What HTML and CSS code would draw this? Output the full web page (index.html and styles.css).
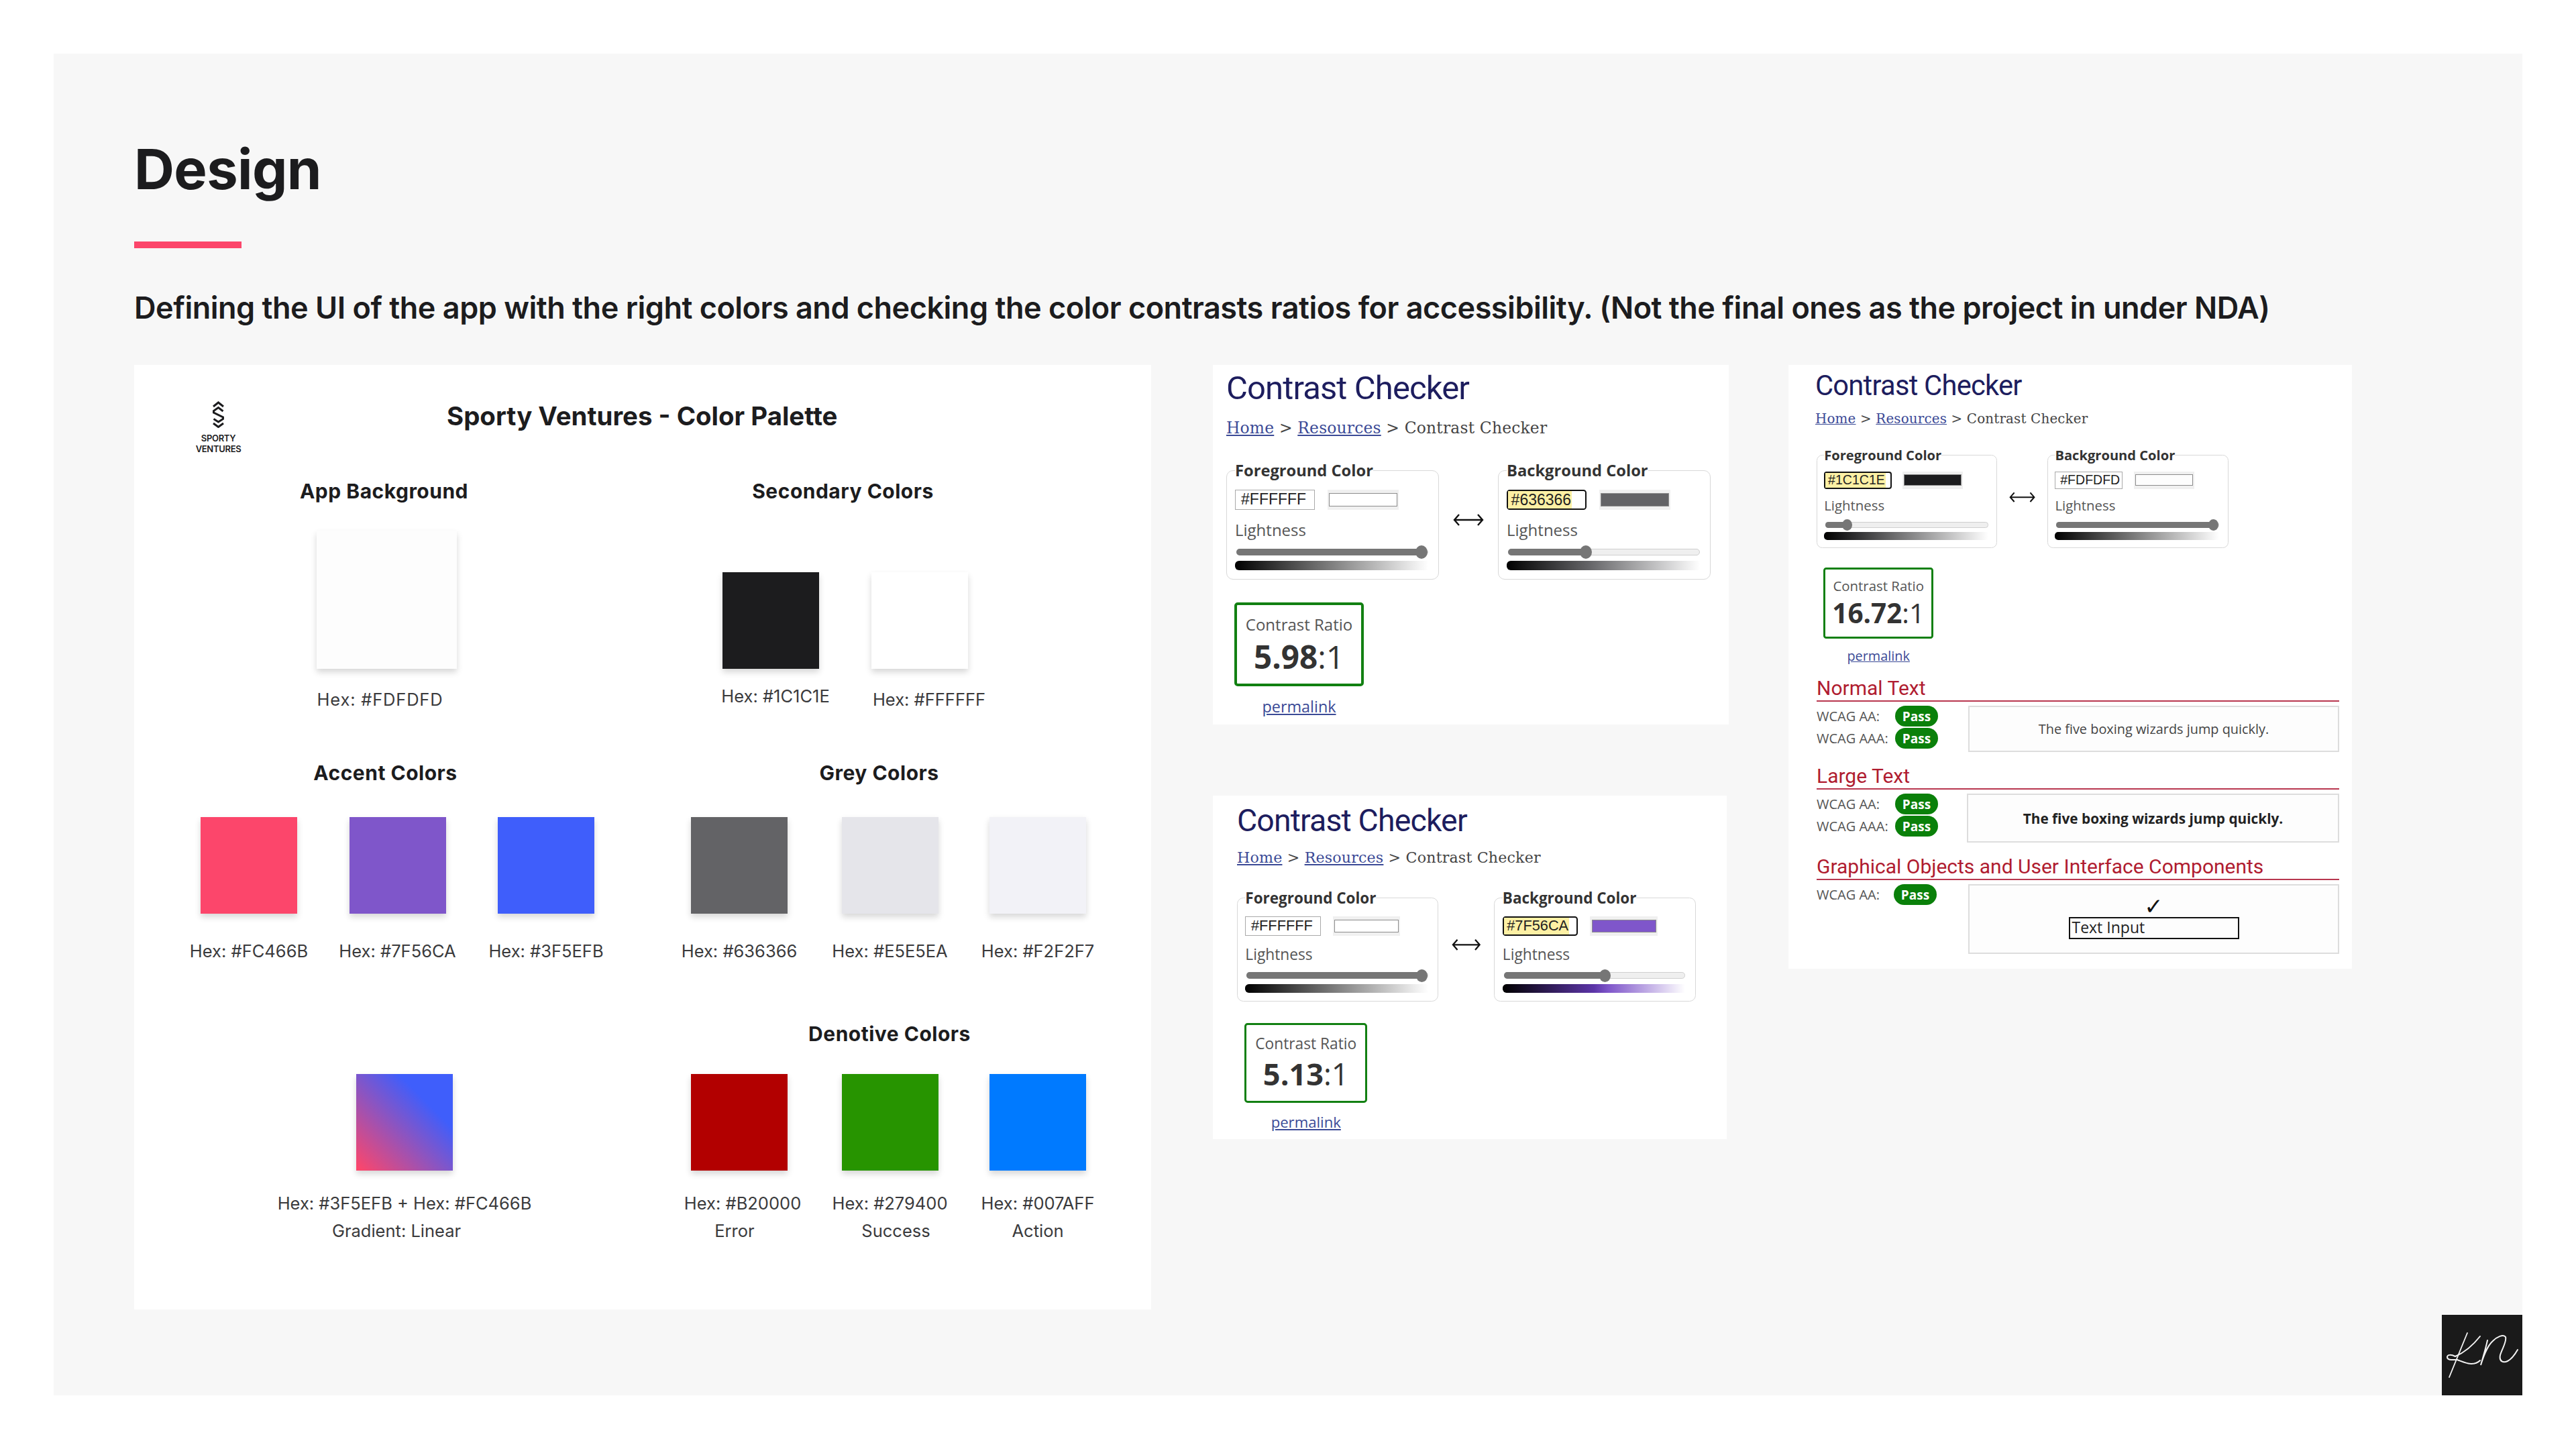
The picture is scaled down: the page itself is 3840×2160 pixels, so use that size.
FILE: index.html
```html
<!DOCTYPE html>
<html lang="en">
<head>
<meta charset="utf-8">
<title>Design</title>
<link rel="stylesheet" href="styles.css">
</head>
<body>
<main class="panel">
  <h1 class="title">Design</h1>
  <div class="title-bar"></div>
  <p class="lead">Defining the UI of the app with the right colors and checking the color contrasts ratios for accessibility. (Not the final ones as the project in under NDA)</p>

  <div class="boards">
    <section class="palette">
      <header class="palette-head">
        <div class="brand">
          <svg class="brand-mark" viewBox="0 0 17 40" width="17" height="40" aria-hidden="true">
            <path d="M1 8 L8.5 2 L16 8 M15.5 15 L8.5 9.5 L1.5 14.5 V17 L15.5 24 V26.5 L8.5 31 L1.5 26.5 M1 33 L8.5 38.5 L16 33" fill="none" stroke="#1c1c1e" stroke-width="3"/>
          </svg>
          <span class="brand-name">SPORTY<br>VENTURES</span>
        </div>
        <h2 class="palette-title">Sporty Ventures - Color Palette</h2>
      </header>

      <div class="palette-grid">
        <div class="group">
          <h3 class="group-title t-app">App Background</h3>
          <div class="swatches s-app">
            <div class="item item-wide">
              <div class="swatch big c-fdfdfd"></div>
              <span class="hex l-shift-app">Hex: #FDFDFD</span>
            </div>
          </div>
        </div>
        <div class="group">
          <h3 class="group-title t-secondary">Secondary Colors</h3>
          <div class="swatches s-secondary">
            <div class="item">
              <div class="swatch c-1c1c1e"></div>
              <span class="hex near l-shift-black">Hex: #1C1C1E</span>
            </div>
            <div class="item">
              <div class="swatch c-ffffff"></div>
              <span class="hex l-shift-white">Hex: #FFFFFF</span>
            </div>
          </div>
        </div>

        <div class="group">
          <h3 class="group-title t-accent">Accent Colors</h3>
          <div class="swatches s-accent">
            <div class="item"><div class="swatch c-fc466b"></div><span class="hex h-tight">Hex: #FC466B</span></div>
            <div class="item"><div class="swatch c-7f56ca"></div><span class="hex h-tight">Hex: #7F56CA</span></div>
            <div class="item"><div class="swatch c-3f5efb"></div><span class="hex h-tight">Hex: #3F5EFB</span></div>
          </div>
        </div>
        <div class="group">
          <h3 class="group-title t-grey">Grey Colors</h3>
          <div class="swatches s-grey">
            <div class="item"><div class="swatch c-636366"></div><span class="hex h-tight">Hex: #636366</span></div>
            <div class="item item-mid"><div class="swatch c-e5e5ea"></div><span class="hex h-tight">Hex: #E5E5EA</span></div>
            <div class="item"><div class="swatch c-f2f2f7"></div><span class="hex h-tight">Hex: #F2F2F7</span></div>
          </div>
        </div>

        <div class="group group-notitle">
          <div class="swatches s-gradient">
            <div class="item">
              <div class="swatch c-gradient"></div>
              <span class="hex h-grad">Hex: #3F5EFB + Hex: #FC466B</span>
              <span class="hex-note l-shift-grad">Gradient: Linear</span>
            </div>
          </div>
        </div>
        <div class="group">
          <h3 class="group-title t-denotive">Denotive Colors</h3>
          <div class="swatches s-grey s-denotive">
            <div class="item"><div class="swatch c-b20000"></div><span class="hex h-den l-right-s">Hex: #B20000</span><span class="hex-note l-left">Error</span></div>
            <div class="item item-mid"><div class="swatch c-279400"></div><span class="hex h-den">Hex: #279400</span><span class="hex-note l-right">Success</span></div>
            <div class="item"><div class="swatch c-007aff"></div><span class="hex h-den">Hex: #007AFF</span><span class="hex-note">Action</span></div>
          </div>
        </div>
      </div>
    </section>

    <div class="checker-col">
      <section class="checker size-a">
        <h2 class="checker-title">Contrast Checker</h2>
        <nav class="crumbs"><a href="#">Home</a> &gt; <a href="#">Resources</a> &gt; Contrast Checker</nav>
        <div class="pickers">
          <fieldset class="picker">
            <legend>Foreground Color</legend>
            <div class="field-row"><span class="hex-input">#FFFFFF</span><span class="well"><span class="well-color c-ffffff"></span></span></div>
            <div class="light-label">Lightness</div>
            <div class="slider" style="--v:1"><span class="slider-fill"></span><span class="slider-thumb"></span></div>
            <div class="ramp ramp-white"></div>
          </fieldset>
          <svg class="swap" viewBox="0 0 46 24" aria-hidden="true"><path d="M2 12 H44 M9 4 L2 12 L9 20 M37 4 L44 12 L37 20" fill="none" stroke="#111" stroke-width="2.4"/></svg>
          <fieldset class="picker">
            <legend>Background Color</legend>
            <div class="field-row"><span class="hex-input focus"><span class="hl">#636366</span></span><span class="well"><span class="well-color c-636366"></span></span></div>
            <div class="light-label">Lightness</div>
            <div class="slider" style="--v:.4"><span class="slider-fill"></span><span class="slider-thumb"></span></div>
            <div class="ramp ramp-grey"></div>
          </fieldset>
        </div>
        <div class="ratio-wrap">
          <div class="ratio"><span class="ratio-label">Contrast Ratio</span><span class="ratio-value"><b>5.98</b>:1</span></div>
          <a class="permalink" href="#">permalink</a>
        </div>
      </section>

      <section class="checker size-b">
        <h2 class="checker-title">Contrast Checker</h2>
        <nav class="crumbs"><a href="#">Home</a> &gt; <a href="#">Resources</a> &gt; Contrast Checker</nav>
        <div class="pickers">
          <fieldset class="picker">
            <legend>Foreground Color</legend>
            <div class="field-row"><span class="hex-input">#FFFFFF</span><span class="well"><span class="well-color c-ffffff"></span></span></div>
            <div class="light-label">Lightness</div>
            <div class="slider" style="--v:1"><span class="slider-fill"></span><span class="slider-thumb"></span></div>
            <div class="ramp ramp-white"></div>
          </fieldset>
          <svg class="swap" viewBox="0 0 46 24" aria-hidden="true"><path d="M2 12 H44 M9 4 L2 12 L9 20 M37 4 L44 12 L37 20" fill="none" stroke="#111" stroke-width="2.4"/></svg>
          <fieldset class="picker">
            <legend>Background Color</legend>
            <div class="field-row"><span class="hex-input focus"><span class="hl">#7F56CA</span></span><span class="well"><span class="well-color c-7f56ca"></span></span></div>
            <div class="light-label">Lightness</div>
            <div class="slider" style="--v:.56"><span class="slider-fill"></span><span class="slider-thumb"></span></div>
            <div class="ramp ramp-purple"></div>
          </fieldset>
        </div>
        <div class="ratio-wrap">
          <div class="ratio"><span class="ratio-label">Contrast Ratio</span><span class="ratio-value"><b>5.13</b>:1</span></div>
          <a class="permalink" href="#">permalink</a>
        </div>
      </section>
    </div>

    <section class="checker size-c">
      <h2 class="checker-title">Contrast Checker</h2>
      <nav class="crumbs"><a href="#">Home</a> &gt; <a href="#">Resources</a> &gt; Contrast Checker</nav>
      <div class="pickers">
        <fieldset class="picker">
          <legend>Foreground Color</legend>
          <div class="field-row"><span class="hex-input focus"><span class="hl">#1C1C1E</span></span><span class="well"><span class="well-color c-1c1c1e"></span></span></div>
          <div class="light-label">Lightness</div>
          <div class="slider" style="--v:.105"><span class="slider-fill"></span><span class="slider-thumb"></span></div>
          <div class="ramp ramp-dark"></div>
        </fieldset>
        <svg class="swap" viewBox="0 0 46 24" aria-hidden="true"><path d="M2 12 H44 M9 4 L2 12 L9 20 M37 4 L44 12 L37 20" fill="none" stroke="#111" stroke-width="2.4"/></svg>
        <fieldset class="picker">
          <legend>Background Color</legend>
          <div class="field-row"><span class="hex-input">#FDFDFD</span><span class="well"><span class="well-color c-fdfdfd"></span></span></div>
          <div class="light-label">Lightness</div>
          <div class="slider" style="--v:1"><span class="slider-fill"></span><span class="slider-thumb"></span></div>
          <div class="ramp ramp-white"></div>
        </fieldset>
      </div>
      <div class="ratio-wrap">
        <div class="ratio"><span class="ratio-label">Contrast Ratio</span><span class="ratio-value"><b>16.72</b>:1</span></div>
        <a class="permalink" href="#">permalink</a>
      </div>

      <h3 class="result-title">Normal Text</h3>
      <div class="result">
        <div class="levels">
          <div class="level"><span class="level-name">WCAG AA:</span><span class="pill">Pass</span></div>
          <div class="level"><span class="level-name">WCAG AAA:</span><span class="pill">Pass</span></div>
        </div>
        <div class="sample sample-normal">The five boxing wizards jump quickly.</div>
      </div>

      <h3 class="result-title">Large Text</h3>
      <div class="result">
        <div class="levels levels-large">
          <div class="level"><span class="level-name">WCAG AA:</span><span class="pill">Pass</span></div>
          <div class="level"><span class="level-name">WCAG AAA:</span><span class="pill">Pass</span></div>
        </div>
        <div class="sample sample-large">The five boxing wizards jump quickly.</div>
      </div>

      <h3 class="result-title">Graphical Objects and User Interface Components</h3>
      <div class="result">
        <div class="levels">
          <div class="level level-nudge"><span class="level-name">WCAG AA:</span><span class="pill">Pass</span></div>
        </div>
        <div class="sample sample-ui">
          <span class="check">✓</span>
          <span class="text-input">Text Input</span>
        </div>
      </div>
    </section>
  </div>

  <div class="signature">
    <svg viewBox="0 0 120 120" width="120" height="120" aria-hidden="true">
      <path d="M38 27 L11 93" fill="none" stroke="#f2f2f2" stroke-width="1.8" stroke-linecap="round"/>
      <path d="M57 32 C46 46 34 56 20 62 C14 59 8 59 8 63 C8 68 16 67 23 67 C31 70 37 73 44 73 C50 73 54 71 57 68" fill="none" stroke="#f2f2f2" stroke-width="2" stroke-linecap="round"/>
      <path d="M68 38 C65 52 61 64 58 75 C62 62 67 47 76 39 C82 33 92 28 95 33 C97 40 90 50 87 60 C85 70 92 72 98 69 C104 66 109 59 113 52" fill="none" stroke="#f2f2f2" stroke-width="2" stroke-linecap="round"/>
    </svg>
  </div>
</main>
</body>
</html>
```

FILE: styles.css
```css
* { box-sizing: border-box; }

html, body { margin: 0; padding: 0; background: #fff; }

body {
  width: 3840px;
  height: 2160px;
  padding: 80px;
  font-family: Inter, "Liberation Sans", sans-serif;
  color: #1c1c1e;
}

.panel {
  position: relative;
  width: 3680px;
  height: 2000px;
  padding: 122px 0 0 120px;
  background: #f7f7f7;
}

.title {
  margin: 0;
  font-size: 83px;
  line-height: 100px;
  font-weight: 700;
  letter-spacing: -0.6px;
}

.title-bar {
  width: 160px;
  height: 10px;
  margin-top: 58px;
  background: #fc466b;
}

.lead {
  margin: 59px 0 0;
  font-size: 45px;
  line-height: 60px;
  font-weight: 600;
  letter-spacing: -0.49px;
  white-space: nowrap;
}

.boards {
  display: flex;
  align-items: flex-start;
  margin-top: 55px;
}

/* Palette board */
.palette {
  width: 1516px;
  height: 1408px;
  padding-top: 54px;
  background: #fff;
  flex: none;
}

.palette-head {
  display: flex;
  align-items: flex-start;
  height: 77px;
  padding-left: 92px;
}

.brand {
  display: flex;
  flex-direction: column;
  align-items: center;
  width: 67px;
}

.brand-mark { display: block; }

.brand-name {
  margin-top: 7px;
  font-size: 13px;
  line-height: 16px;
  font-weight: 600;
  text-align: center;
  letter-spacing: -0.3px;
}

.palette-title {
  margin: 2px 0 0 307px;
  font-size: 38.4px;
  line-height: 40px;
  font-weight: 700;
  white-space: nowrap;
}

.palette-grid {
  display: grid;
  grid-template-columns: 800px 716px;
  grid-template-rows: 420px 389px auto;
  margin-top: 37px;
}

.group-title {
  margin: 0;
  font-size: 30px;
  line-height: 40px;
  font-weight: 700;
  letter-spacing: 0.5px;
  text-align: center;
  white-space: nowrap;
}

.t-app { width: 745px; }
.t-accent { width: 749px; }
.t-secondary { width: 513px; }
.t-grey { width: 621px; }
.t-denotive { width: 652px; }

.swatches {
  display: flex;
  align-items: flex-end;
}

.s-app { margin: 39px 0 0 272px; }
.s-secondary { margin: 39px 0 0 77px; gap: 78px; height: 326px; align-items: flex-start; padding-top: 62px; }
.s-accent { margin: 46px 0 0 99px; gap: 77.5px; }
.s-grey { margin: 46px 0 0 30px; gap: 78.5px; }
.s-denotive { margin-top: 40px; }
.s-gradient { margin: 80px 0 0 331px; }

.item {
  display: flex;
  flex-direction: column;
  align-items: center;
  width: 144px;
  flex: none;
}

.item-wide { width: 209px; }

.item-mid { margin: 0 -2px 0 2px; }

.swatch {
  width: 144px;
  height: 144px;
  box-shadow: 0 5px 9px rgba(0, 0, 0, 0.16);
}

.swatch.big { width: 209px; height: 206px; }

.c-fdfdfd { background: #fdfdfd; }
.c-1c1c1e { background: #1c1c1e; }
.c-ffffff { background: #fff; }
.c-fc466b { background: #fc466b; }
.c-7f56ca { background: #7f56ca; }
.c-3f5efb { background: #3f5efb; }
.c-636366 { background: #636366; }
.c-e5e5ea { background: #e5e5ea; }
.c-f2f2f7 { background: #f2f2f7; }
.c-b20000 { background: #b20000; }
.c-279400 { background: #279400; }
.c-007aff { background: #007aff; }
.c-gradient { background: linear-gradient(45deg, #fc466b 2%, #3f5efb 72%); }

.hex, .hex-note {
  font-size: 25.5px;
  line-height: 40px;
  font-weight: 400;
  color: #3a3a3c;
  white-space: nowrap;
}

.hex { margin-top: 26px; }
.hex.near { margin-top: 21px; }
.hex.h-tight { margin-top: 36px; }
.hex.h-den { margin-top: 29px; }
.hex.h-grad { margin-top: 29px; }
.hex-note { margin-top: 1px; }

.l-shift-app { margin-right: 20px; letter-spacing: 0.8px; }
.l-shift-black { margin-left: 14px; }
.l-shift-white { margin-left: 28px; }
.l-shift-grad { margin-right: 24px; }
.l-right-s { margin-left: 10px; }
.l-left { margin-right: 14px; }
.l-right { margin-left: 18px; }

/* Contrast checker cards (sized in em, each card sets its own scale) */
.checker-col {
  display: flex;
  flex-direction: column;
  gap: 106px;
  width: 769px;
  margin-left: 92px;
  flex: none;
}

.checker {
  background: #fff;
  color: #444;
  font-family: "Open Sans", sans-serif;
}

.size-a { font-size: 20px; width: 769px; height: 536px; padding: 1px 0 0 20px; }
.size-b { font-size: 18.94px; width: 766px; height: 512px; padding: 5px 0 0 36px; }
.size-c { font-size: 17px; width: 840px; margin-left: 89px; padding: 2px 19px 22px 42px; flex: none; }

.size-c .checker-title, .size-c .crumbs { margin-left: -2px; }

.checker-title {
  margin: 0;
  font-family: Roboto, sans-serif;
  font-size: 2.45em;
  height: 1.388em;
  line-height: 1.388em;
  font-weight: 400;
  letter-spacing: -0.018em;
  color: #1d1d5e;
}

.crumbs {
  font-family: "DejaVu Serif", serif;
  font-size: 1.17em;
  height: 2.137em;
  line-height: 2.137em;
  letter-spacing: 0.008em;
  color: #444;
  white-space: nowrap;
}

.crumbs a { color: #3b4a96; text-decoration: underline; }

.pickers {
  display: flex;
  align-items: center;
  margin-top: 1.15em;
}

.picker {
  width: 15.85em;
  height: 8.9em;
  margin: 0;
  padding: 0.7em 0.75em 0 0.6em;
  border: 1px solid #d8d8d8;
  border-radius: 0.5em;
  min-inline-size: 0;
  flex: none;
}

.picker legend {
  padding: 0;
  font-size: 1.185em;
  line-height: 1.266em;
  font-weight: 700;
  color: #333;
  white-space: nowrap;
}

.swap {
  width: 2.3em;
  height: 1.2em;
  margin: 0 1.05em;
  flex: none;
}

.field-row {
  display: flex;
  gap: 0.95em;
  height: 1.5em;
}

.hex-input {
  display: flex;
  align-items: center;
  width: 5.17em;
  height: 1.304em;
  padding-left: 0.35em;
  border: 0.08em solid #a9a9a9;
  background: #fff;
  font-family: "Liberation Sans", sans-serif;
  font-size: 1.15em;
  color: #222;
}

.hex-input.focus {
  padding-left: 0;
  border: 0.13em solid #111;
  border-radius: 0.2em;
}

.hl {
  align-self: stretch;
  display: flex;
  align-items: center;
  padding: 0 0.05em 0 0.2em;
  background: #fdf0a4;
}

.well {
  display: block;
  width: 5.3em;
  padding: 0.25em 0.12em;
  background: #f0f0f0;
}

.well-color {
  display: block;
  height: 100%;
  border: 0.08em solid #8c8c8c;
}

.light-label {
  margin-top: 0.625em;
  font-size: 1.2em;
  line-height: 1.25em;
  height: 1.25em;
  color: #555;
}

.slider {
  position: relative;
  height: 0.5em;
  margin-top: 0.65em;
  margin-left: 0.1em;
  border: 1px solid #cfcfcf;
  border-radius: 0.25em;
  background: #efefef;
}

.slider-fill {
  display: block;
  height: 100%;
  width: calc((100% - 0.9em) * var(--v) + 0.45em);
  margin: -1px;
  padding: 1px;
  box-sizing: content-box;
  border-radius: 0.25em;
  background: #767676;
}

.slider-thumb {
  position: absolute;
  top: -0.3em;
  left: calc((100% - 0.9em) * var(--v));
  width: 0.9em;
  height: 1em;
  border-radius: 50%;
  background: #767676;
}

.ramp {
  height: 0.7em;
  margin-top: 0.4em;
  border-radius: 0.3em 0 0 0.3em;
}

.ramp-white { background: linear-gradient(90deg, #000, #fff); }
.ramp-grey { background: linear-gradient(90deg, #000 0%, #636366 42%, #fff 100%); }
.ramp-dark { background: linear-gradient(90deg, #000 0%, #1c1c1e 12%, #fff 100%); }
.ramp-purple { background: linear-gradient(90deg, #000 0%, #5c35a8 50%, #7f56ca 58%, #fff 100%); }

.ratio-wrap {
  display: flex;
  flex-direction: column;
  align-items: center;
  width: 9.65em;
  margin: 1.7em 0 0 0.6em;
}

.ratio {
  display: flex;
  flex-direction: column;
  align-items: center;
  width: 100%;
  height: 6.25em;
  padding-top: 0.6em;
  border: 0.2em solid #128012;
  border-radius: 0.25em;
}

.ratio-label {
  font-size: 1.2em;
  line-height: 1.4em;
  color: #555;
  white-space: nowrap;
}

.ratio-value {
  margin-top: 0.06em;
  font-size: 2.38em;
  line-height: 1.2em;
  color: #333;
  white-space: nowrap;
}

.ratio-value b { font-weight: 700; }

.permalink {
  margin-top: 0.5em;
  font-size: 1.17em;
  line-height: 1.6em;
  color: #3b4a96;
  text-decoration: underline;
}

/* Result sections */
.result-title {
  margin: 14px 0 0;
  height: 42px;
  border-bottom: 2px solid #b8374f;
  font-family: Roboto, sans-serif;
  font-size: 30px;
  line-height: 44px;
  font-weight: 400;
  color: #b01c30;
  white-space: nowrap;
}

.ratio-wrap + .result-title { margin-top: 10px; }

.result {
  display: flex;
  align-items: flex-start;
  margin-top: 6px;
}

.levels {
  display: flex;
  flex-direction: column;
  gap: 2px;
  width: 226px;
  flex: none;
}

.levels-large { width: 224px; }

.level {
  display: flex;
  align-items: center;
  height: 31px;
}

.level-name {
  width: 117px;
  font-size: 20px;
  color: #555;
  white-space: nowrap;
}

.level-nudge .level-name { width: 115px; }

.pill {
  display: flex;
  align-items: center;
  justify-content: center;
  width: 64px;
  height: 31px;
  border-radius: 15.5px;
  background: #0a800a;
  color: #fff;
  font-size: 19px;
  font-weight: 700;
}

.sample {
  flex: 1;
  display: flex;
  flex-direction: column;
  align-items: center;
  justify-content: center;
  border: 2px solid #ddd;
  background: #fdfdfd;
  white-space: nowrap;
}

.sample-normal { height: 69px; font-size: 19.9px; color: #444; }
.sample-large { height: 73px; font-size: 20.8px; font-weight: 700; color: #222; }
.sample-ui { height: 104px; justify-content: flex-start; padding-top: 15px; }

.check {
  height: 32px;
  font-family: "DejaVu Sans", sans-serif;
  font-size: 34px;
  line-height: 32px;
  color: #111;
}

.text-input {
  width: 254px;
  height: 33px;
  padding-left: 3px;
  border: 2.5px solid #111;
  font-size: 23px;
  line-height: 27px;
  color: #222;
}

/* Signature tile */
.signature {
  position: absolute;
  right: 0;
  bottom: 0;
  width: 120px;
  height: 120px;
  background: #1a1a1a;
}

.signature svg { display: block; }
```
